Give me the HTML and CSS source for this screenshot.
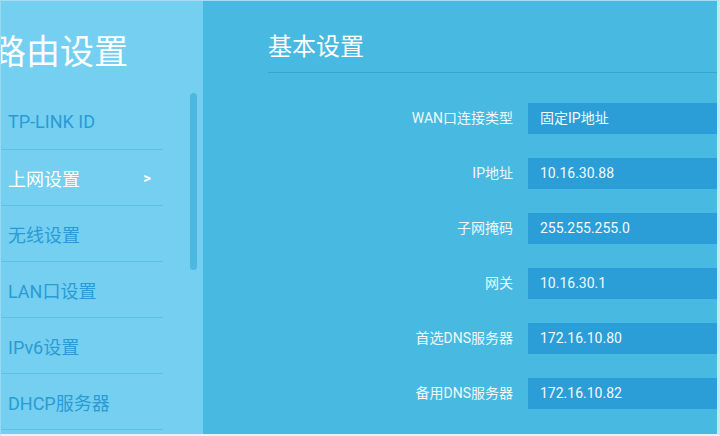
FILE: index.html
```html
<!DOCTYPE html>
<html lang="zh-CN">
<head>
<meta charset="utf-8">
<title>路由设置</title>
<link rel="stylesheet" href="styles.css">
</head>
<body>
<div class="screen">
  <aside class="sidebar">
    <h1 class="side-title">路由设置</h1>
    <div class="side-body">
      <ul class="menu">
        <li class="menu-item">TP-LINK ID</li>
        <li class="menu-item active"><span>上网设置</span><span class="chev">&gt;</span></li>
        <li class="menu-item">无线设置</li>
        <li class="menu-item">LAN口设置</li>
        <li class="menu-item">IPv6设置</li>
        <li class="menu-item">DHCP服务器</li>
      </ul>
      <div class="scrollbar"></div>
    </div>
  </aside>
  <main class="main">
    <h2 class="heading">基本设置</h2>
    <div class="form">
      <div class="label">WAN口连接类型</div><div class="field">固定IP地址</div>
      <div class="label">IP地址</div><div class="field">10.16.30.88</div>
      <div class="label">子网掩码</div><div class="field">255.255.255.0</div>
      <div class="label">网关</div><div class="field">10.16.30.1</div>
      <div class="label">首选DNS服务器</div><div class="field">172.16.10.80</div>
      <div class="label">备用DNS服务器</div><div class="field">172.16.10.82</div>
    </div>
  </main>
</div>
</body>
</html>
```
FILE: styles.css
```css
html, body {
  margin: 0;
  padding: 0;
  width: 720px;
  height: 436px;
  overflow: hidden;
  background: #48b9e1;
  font-family: Roboto, "Noto Sans CJK SC", sans-serif;
}

.screen {
  box-sizing: border-box;
  width: 720px;
  height: 436px;
  display: flex;
  border-top: 1px solid #a6ddf2;
  border-right: 3px solid #c4e8f6;
  border-bottom: 2px solid #e4f4fb;
  border-left: 1px solid #98d8f0;
  overflow: hidden;
}

.sidebar {
  width: 202px;
  flex: none;
  background: #74cff0;
  overflow: hidden;
}

.side-title {
  margin: 0 0 0 -9px;
  padding: 31px 0 22px;
  line-height: 40px;
  font-size: 34px;
  font-weight: 400;
  color: #ffffff;
  white-space: nowrap;
}

.side-body {
  position: relative;
}

.menu {
  list-style: none;
  margin: 0;
  padding: 0;
  width: 162px;
}

.menu-item {
  box-sizing: border-box;
  height: 56px;
  display: flex;
  align-items: center;
  justify-content: space-between;
  padding: 0 12px 0 7px;
  border-bottom: 1px solid #5dbfe4;
  font-size: 18px;
  color: #2b9bd5;
}

.menu-item.active {
  color: #ffffff;
}

.chev {
  font-size: 15px;
  font-weight: 700;
}

.scrollbar {
  position: absolute;
  left: 189px;
  top: -1px;
  width: 7px;
  height: 177px;
  border-radius: 4px;
  background: #4db8df;
}

.main {
  flex: 1;
  min-width: 0;
  padding-left: 65px;
}

.heading {
  margin: 0;
  padding: 28px 0 7px;
  line-height: 36px;
  font-size: 24px;
  font-weight: 400;
  color: #ffffff;
  border-bottom: 1px solid #37a4d1;
}

.form {
  display: grid;
  grid-template-columns: 310px 1fr;
  column-gap: 15px;
  row-gap: 24px;
  margin-top: 30px;
  margin-left: -65px;
}

.label {
  height: 31px;
  line-height: 31px;
  text-align: right;
  font-size: 14px;
  color: #eef8fd;
  white-space: nowrap;
}

.field {
  height: 31px;
  line-height: 31px;
  padding-left: 12px;
  background: #2b9ed8;
  font-size: 14px;
  color: #f2fafe;
  white-space: nowrap;
}
```
